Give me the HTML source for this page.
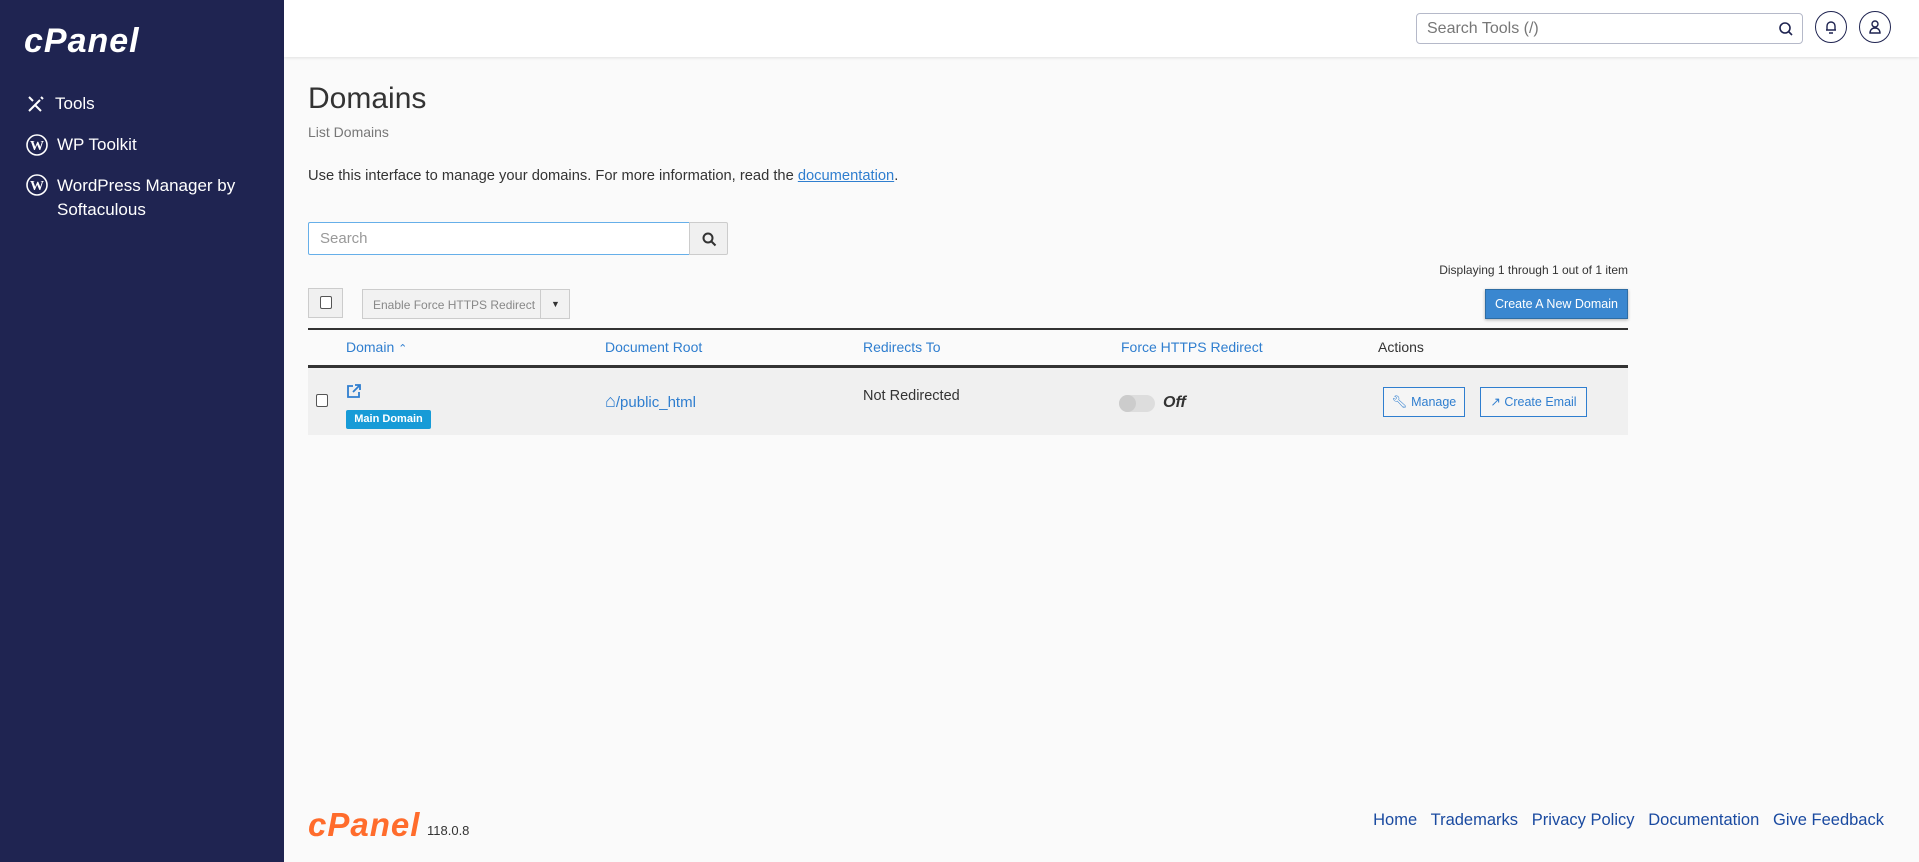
<!DOCTYPE html>
<html><head><meta charset="utf-8"><style>
*{box-sizing:border-box;margin:0;padding:0}
body{width:1919px;height:862px;overflow:hidden;background:#fafafa;font-family:"Liberation Sans",sans-serif;color:#333;position:relative}
.abs{position:absolute}
#side{left:0;top:0;width:284px;height:862px;background:#1f2451}
#side .it{position:absolute;left:26px;color:#fff;font-size:17px;display:flex;align-items:center}
#side .it svg{margin-right:9px}
#top{left:284px;top:0;width:1635px;height:57px;background:#fff;box-shadow:0 1px 3px rgba(0,0,0,.1)}
a{color:#2f7ecf}
.th{position:absolute;top:339px;font-size:14px;color:#2f7ecf}
.btn{position:absolute;border:1px solid #ccc;background:#f0f0f0}
</style></head><body>
<div id="side" class="abs">
  <div class="abs" style="left:24px;top:22px;color:#fff;font-size:34px;font-weight:bold;font-style:italic;letter-spacing:1px">cPanel</div>
  <div class="it" style="top:94px"><svg width="20" height="20" viewBox="0 0 20 20" stroke="#fff" stroke-width="2" fill="none"><path d="M3 17L14 6M15 3l2 2M3 3l4 4M9 11l6 6"/></svg>Tools</div>
  <div class="it" style="top:134px"><svg width="22" height="22" viewBox="0 0 22 22"><circle cx="11" cy="11" r="10" fill="none" stroke="#fff" stroke-width="1.6"/><text x="11" y="16" text-anchor="middle" fill="#fff" font-size="14" font-weight="bold" font-family="Liberation Serif">W</text></svg>WP Toolkit</div>
  <div class="it" style="top:174px;align-items:flex-start;line-height:24px"><svg width="22" height="22" viewBox="0 0 22 22"><circle cx="11" cy="11" r="10" fill="none" stroke="#fff" stroke-width="1.6"/><text x="11" y="16" text-anchor="middle" fill="#fff" font-size="14" font-weight="bold" font-family="Liberation Serif">W</text></svg><span>WordPress Manager by<br>Softaculous</span></div>
</div>
<div id="top" class="abs">
  <div class="abs" style="left:1132px;top:13px;width:387px;height:31px;border:1px solid #b5b9c9;border-radius:4px;font-size:16px;color:#777;padding:6px 10px">Search Tools (/)
    <svg class="abs" style="right:8px;top:7px" width="16" height="16" viewBox="0 0 16 16" fill="none" stroke="#1f2451" stroke-width="1.6"><circle cx="7" cy="7" r="5"/><path d="M11 11l3 3"/></svg></div>
  <div class="abs" style="left:1531px;top:11px;width:32px;height:32px;border:1.5px solid #1f2451;border-radius:50%"><svg class="abs" style="left:8px;top:7px" width="14" height="16" viewBox="0 0 14 16" fill="none" stroke="#1f2451" stroke-width="1.4"><path d="M3 11V7a4 4 0 018 0v4H2h10M5 14h4"/></svg></div>
  <div class="abs" style="left:1575px;top:11px;width:32px;height:32px;border:1.5px solid #1f2451;border-radius:50%"><svg class="abs" style="left:8px;top:7px" width="14" height="16" viewBox="0 0 14 16" fill="none" stroke="#1f2451" stroke-width="1.4"><circle cx="7" cy="5" r="3"/><path d="M2 14c0-3 2-5 5-5s5 2 5 5z"/></svg></div>
</div>
<div class="abs" style="left:308px;top:82px;font-size:30px;color:#333;font-weight:300">Domains</div>
<div class="abs" style="left:308px;top:124px;font-size:14px;color:#777">List Domains</div>
<div class="abs" style="left:308px;top:168px;font-size:14.7px">Use this interface to manage your domains. For more information, read the <a href="#">documentation</a>.</div>
<div class="abs" style="left:308px;top:222px;width:382px;height:33px;border:1px solid #66afe9;background:#fff;font-size:15px;color:#999;padding:7px 11px;border-radius:2px 0 0 2px">Search</div>
<div class="btn" style="left:689px;top:222px;width:39px;height:33px;border-radius:0 2px 2px 0"><svg class="abs" style="left:12px;top:9px" width="15" height="15" viewBox="0 0 15 15" fill="none" stroke="#333" stroke-width="2"><circle cx="6" cy="6" r="4.5"/><path d="M9.5 9.5l4 4"/></svg></div>
<div class="abs" style="right:291px;top:263px;font-size:12px;color:#333">Displaying 1 through 1 out of 1 item</div>
<div class="btn" style="left:308px;top:288px;width:35px;height:30px"><div class="abs" style="left:11px;top:7px;width:12px;height:13px;border:1px solid #555;border-radius:2px;background:#fff"></div></div>
<div class="btn" style="left:362px;top:289px;width:208px;height:30px;font-size:12px;color:#888;padding:8px 10px;background:#f2f2f2">Enable Force HTTPS Redirect<span class="abs" style="left:177px;top:0;width:30px;height:28px;border-left:1px solid #ccc;text-align:center;line-height:28px;color:#333;font-size:9px">▼</span></div>
<div class="abs" style="left:1485px;top:289px;width:143px;height:30px;background:#3a87d0;border:1px solid #2e6da4;color:#fff;font-size:12.5px;text-align:center;line-height:28px;box-shadow:0 1px 3px rgba(0,0,0,.3)">Create A New Domain</div>
<div class="abs" style="left:308px;top:328px;width:1320px;height:2px;background:#333"></div>
<div class="th" style="left:346px">Domain <span style="font-size:11px">⌃</span></div>
<div class="th" style="left:605px">Document Root</div>
<div class="th" style="left:863px">Redirects To</div>
<div class="th" style="left:1121px">Force HTTPS Redirect</div>
<div class="th" style="left:1378px;color:#333">Actions</div>
<div class="abs" style="left:308px;top:365px;width:1320px;height:70px;background:#f0f0f0;border-top:3px solid #333"></div>
<div class="abs" style="left:316px;top:394px;width:12px;height:13px;border:1px solid #555;border-radius:2px;background:#fff"></div>
<svg class="abs" style="left:346px;top:384px" width="15" height="15" viewBox="0 0 15 15" fill="none" stroke="#2f7ecf" stroke-width="1.8"><path d="M7 2H2v11h11V8M9 1h5v5M14 1L7 8"/></svg>
<div class="abs" style="left:346px;top:410px;width:85px;height:19px;background:#179bd7;color:#fff;font-size:11px;font-weight:bold;text-align:center;line-height:19px;border-radius:2px">Main Domain</div>
<div class="abs" style="left:605px;top:391px;font-size:15px;color:#2f7ecf"><span style="font-size:18px">⌂</span>/public_html</div>
<div class="abs" style="left:863px;top:388px;font-size:14.5px">Not Redirected</div>
<div class="abs" style="left:1119px;top:395px;width:36px;height:17px;border-radius:9px;background:#ddd"><div class="abs" style="left:0;top:0;width:17px;height:17px;border-radius:50%;background:#ccc"></div></div>
<div class="abs" style="left:1163px;top:394px;font-size:16px;font-weight:bold;font-style:italic">Off</div>
<div class="abs" style="left:1383px;top:387px;width:82px;height:30px;border:1px solid #2f7ecf;color:#2f7ecf;font-size:12.5px;line-height:28px;text-align:center;background:#f5f5f5">🔧︎ Manage</div>
<div class="abs" style="left:1480px;top:387px;width:107px;height:30px;border:1px solid #2f7ecf;color:#2f7ecf;font-size:12.5px;line-height:28px;text-align:center;background:#f5f5f5">↗ Create Email</div>
<div class="abs" style="left:308px;top:806px;font-size:33px;font-weight:bold;font-style:italic;color:#ff6c2c;letter-spacing:1px">cPanel</div>
<div class="abs" style="left:427px;top:823px;font-size:13px;color:#333">118.0.8</div>
<div class="abs" style="right:35px;top:811px;font-size:16.5px;color:#1a4aa0"><span>Home</span>&nbsp;&nbsp; <span>Trademarks</span>&nbsp;&nbsp; <span>Privacy Policy</span>&nbsp;&nbsp; <span>Documentation</span>&nbsp;&nbsp; <span>Give Feedback</span></div>
</body></html>
